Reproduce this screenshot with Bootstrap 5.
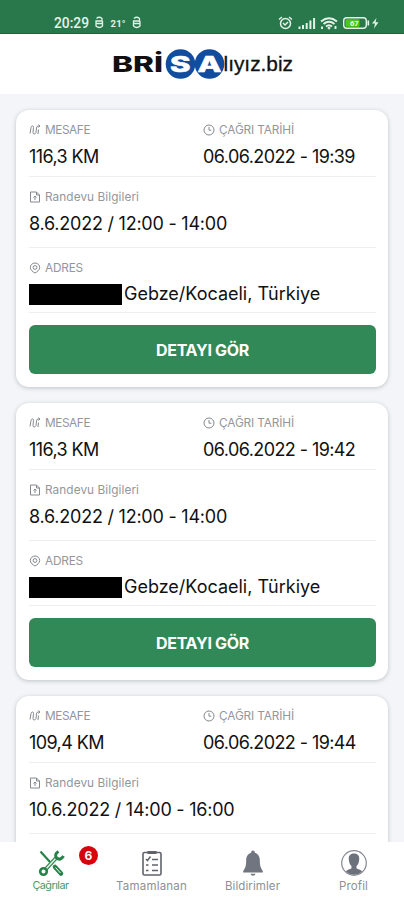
<!DOCTYPE html>
<html lang="tr">
<head>
<meta charset="utf-8">
<meta name="viewport" content="width=device-width, initial-scale=1">
<title>Çağrılar</title>
<link href="https://cdn.jsdelivr.net/npm/bootstrap@5.3.0/dist/css/bootstrap.min.css" rel="stylesheet">
<style>
body{font-family:Inter,"Noto Sans",sans-serif;background:#f3f5f8;color:#111}
.status{height:34px;background:#29784b;border-bottom:1px solid #156b35}
.brand{height:60px}
.feed{padding:16px 16px 0;gap:16.500px}
.call{height:276.500px;border-radius:13px;padding:0 12px 0 13px;box-shadow:0 1px 4px rgba(40,50,60,.26)}
.sec{border-bottom:1px solid #eceef0;padding-top:12px}
.s1{height:67px}.s2{height:71px}.s3{height:65px}
.lbl{height:16px;font-size:11.800px;line-height:16px;color:#93969b;gap:4px}
.val{height:24px;margin-top:6px;padding-top:.600px;font-size:18px;line-height:24px;white-space:nowrap}
.left{width:174px}
.km{letter-spacing:-.600px}.dt{letter-spacing:-.580px}.slot{letter-spacing:-.230px}.adr{letter-spacing:-.010px}
.redact{width:93px;height:21px;background:#000;margin-right:2px}
.go{height:49px;margin-top:12px;background:#308957;border-radius:6px;color:#fff;font-weight:700;font-size:16px;letter-spacing:-.300px}
.go:hover{background:#308957;color:#fff}
.tabs{height:58px}
.tab{width:101px;padding-top:7px;color:#8d9096;font-size:11.500px;line-height:16px}
.tab.on{color:#4a9868}
.tab.on span:not(.count){font-size:10.800px;letter-spacing:-.500px}
.tab svg{margin-bottom:1px}
.count{left:79px;top:4px;width:19px;height:19px;background:#d5040c;font-size:12px;font-weight:700;line-height:19px}
</style>
<script src="https://cdn.jsdelivr.net/npm/bootstrap@5.3.0/dist/js/bootstrap.bundle.min.js"></script>
</head>
<body class="vh-100 overflow-hidden d-flex flex-column">
<svg class="d-none">
<symbol id="route" viewBox="0 0 12 12"><path d="M1 9.500 2 3.500Q2.300 2 3.500 2T4.500 3.500L4 8.500Q4 10 5.200 10T7 8.500L7.500 4Q7.800 2 9 2h2M9.500.5 11 2 9.500 3.500M9 10l.5-4.500"/></symbol>
<symbol id="clock" viewBox="0 0 12 12"><circle cx="6" cy="6" r="5"/><path d="M6 3v3.200h2.300"/></symbol>
<symbol id="doc" viewBox="0 0 12 12"><path d="M1.500 1h6L10.500 4v7h-9zM7.500 1v3h3M6 9V5M4.500 6.500 6 5l1.500 1.500"/></symbol>
<symbol id="pin" viewBox="0 0 12 12"><path d="M6 11C4 10 1.300 8 1.300 5.500a4.700 4.500 0 0 1 9.400 0C10.700 8 8 10 6 11z"/><circle cx="6" cy="5.500" r="1.900"/></symbol>
</svg>

<div class="status flex-shrink-0">
<svg class="d-block" width="404" height="33" fill="none" stroke="#e4f2e8">
<g fill="#e4f2e8" stroke="none" font-family="Roboto, sans-serif"><text x="54" y="28" font-size="14.500" font-weight="500" textLength="35" lengthAdjust="spacingAndGlyphs">20:29</text><text x="110.500" y="27" font-size="9.500" font-weight="700" textLength="15">21°</text></g>
<g stroke-width="1.300"><path d="M96.500 18.500q2.500-2.500 5.500 0V21H96v5q3.200 3 6.500 0v-5M96 23.500h6.500M134 18.500q2.500-2.500 5.500 0V21h-6v5q3.200 3 6.500 0v-5M133.500 23.500h6.500"/></g>
<g stroke-width="1.500"><circle cx="285.500" cy="23.500" r="5"/><path d="M279 19.500l3-2.500M292 19.500l-3-2.500M283 23l2 2 3-3"/></g>
<path stroke-width="2" d="M299.500 29v-2.500M303 29v-4M306.700 29v-6M310.400 29v-8.500M314.100 29V18"/>
<path stroke-width="1.900" d="M321 21.500q8-6.500 16 0M323.500 24q5.500-4.500 11 0M326 26.500q3-2.500 6 0M322 29v-2.500M335.500 29v-3"/><circle cx="329" cy="28" r="1" fill="#e4f2e8"/>
<rect x="343.700" y="17.700" width="22.600" height="10.600" rx="3" stroke-width="1.400"/><rect x="345.500" y="19.300" width="14" height="7.400" rx="1" fill="#4fc51d" stroke="none"/><path stroke-width="1.700" d="M368.300 20.500v5"/>
<text x="350" y="26" font-size="7.500" font-weight="700" fill="#effbe9" stroke="none" font-family="Roboto, sans-serif">67</text>
<path d="M376.500 18l-4.500 5.500h3l-1 5 4.500-6.200h-3z" fill="#e4f2e8" stroke="none"/>
</svg>
</div>

<header class="brand bg-white flex-shrink-0">
<svg class="d-block" width="404" height="60">
<circle cx="180.500" cy="30" r="14.800" fill="#114c9f"/><circle cx="209.500" cy="30" r="14.800" fill="#114c9f"/>
<g font-family="Inter, sans-serif" font-weight="800" font-size="21"><text x="112" y="37.500" textLength="51" lengthAdjust="spacingAndGlyphs" fill="#111">BRİ</text><text x="170" y="37.500" textLength="20.500" lengthAdjust="spacingAndGlyphs" fill="#fff" stroke="#fff" stroke-width=".500">S</text><text x="197.500" y="37.500" textLength="24" lengthAdjust="spacingAndGlyphs" fill="#fff" stroke="#fff" stroke-width=".500">A</text></g>
<text x="223.500" y="37" font-family="Liberation Sans, sans-serif" font-size="20" textLength="69.500" lengthAdjust="spacingAndGlyphs" fill="#111" stroke="#111" stroke-width=".300">lıyız.biz</text>
</svg>
</header>

<main class="feed flex-grow-1 overflow-hidden d-flex flex-column" id="feed"></main>

<nav class="tabs bg-white d-flex flex-shrink-0">
<div class="tab on position-relative d-flex flex-column align-items-center"><svg width="28" height="28" viewBox="0 0 28 28" fill="none" stroke="#268248"><path stroke-width="2.200" d="M3.500 2.500 13 13"/><path stroke-width="4.500" stroke-linecap="round" d="m18 18 6 6.500"/><path stroke="#fff" stroke-width="1" d="m18.500 18.500 5 5.500"/><path stroke-width="4" d="M8 21 20 8"/><path stroke="#dcebe1" stroke-width="1.800" d="M8 21 20 8"/><circle cx="6.500" cy="22.500" r="3.300" stroke-width="2.600" fill="#fff"/><path stroke-width="3" d="M21.500 2.500Q17 5 19.500 9q4 3 7-2"/></svg><span>Çağrılar</span><span class="count position-absolute rounded-circle text-white text-center">6</span></div>
<div class="tab d-flex flex-column align-items-center"><svg width="28" height="28" viewBox="0 0 28 28" fill="none" stroke="#5f636a"><rect x="5" y="3.500" width="18" height="22.500" rx="1.500" stroke-width="1.600"/><path stroke-width="3" d="M9.500 3.500h9"/><path stroke-width="1.500" d="M14 10.500h6M14 16h6M14 21.500h6M8 10l1.500 1.500 3-4M8 16h2.500M8 21.500h2.500"/></svg><span style="letter-spacing:.2px">Tamamlanan</span></div>
<div class="tab d-flex flex-column align-items-center"><svg width="28" height="28" viewBox="0 0 28 28" fill="#707580"><path d="M14 1.500c1.200 0 1.800.9 1.800 2.200 3.700 1 5 4.200 5 7.500 0 5 .7 7.800 3 10.800v1.500H4.200V22c2.300-3 3-5.800 3-10.800 0-3.300 1.300-6.500 5-7.500 0-1.300.6-2.200 1.800-2.200zM11.500 24.700h5q-.5 2-2.500 2t-2.500-2z"/></svg><span style="letter-spacing:.1px">Bildirimler</span></div>
<div class="tab d-flex flex-column align-items-center"><svg width="28" height="28" viewBox="0 0 28 28"><circle cx="14" cy="14" r="12.300" fill="#fff" stroke="#858991" stroke-width="1.200"/><path fill="#6c717c" d="M14 4.500c-4 0-5.500 2.500-5.200 6 .2 3 1.200 5.300 2.700 6.500v2.200c-1.500 1.200-4 1.300-5.700 3 4.500 4.800 12 4.800 16.400 0-1.700-1.700-4.200-1.800-5.700-3V17c1.500-1.200 2.500-3.500 2.700-6.500.3-3.500-1.200-6-5.200-6z"/></svg><span style="letter-spacing:.1px">Profil</span></div>
</nav>

<script>
const icon = n => `<svg width="12" height="12" fill="none" stroke="#85888d" stroke-width="1"><use href="#${n}"/></svg>`;
const label = (n, t, s) => `<div class="lbl d-flex align-items-center">${icon(n)}<span style="letter-spacing:${s}px">${t}</span></div>`;
const calls = [
  ['116,3 KM', '06.06.2022 - 19:39', '8.6.2022 / 12:00 - 14:00', 'Gebze/Kocaeli, Türkiye'],
  ['116,3 KM', '06.06.2022 - 19:42', '8.6.2022 / 12:00 - 14:00', 'Gebze/Kocaeli, Türkiye'],
  ['109,4 KM', '06.06.2022 - 19:44', '10.6.2022 / 14:00 - 16:00', '']
];
document.getElementById('feed').innerHTML = calls.map(([km, date, slot, address]) => `
<article class="call bg-white flex-shrink-0">
  <div class="sec s1 d-flex">
    <div class="left">${label('route', 'MESAFE', -.4)}<div class="val km">${km}</div></div>
    <div>${label('clock', 'ÇAĞRI TARİHİ', -.12)}<div class="val dt">${date}</div></div>
  </div>
  <div class="sec s2">${label('doc', 'Randevu Bilgileri', .08)}<div class="val slot">${slot}</div></div>
  ${address && `<div class="sec s3">${label('pin', 'ADRES', -.2)}<div class="val adr d-flex align-items-center"><span class="redact"></span>${address}</div></div>
  <button class="go btn border-0 w-100 p-0">DETAYI GÖR</button>`}
</article>`).join('');
</script>
</body>
</html>
